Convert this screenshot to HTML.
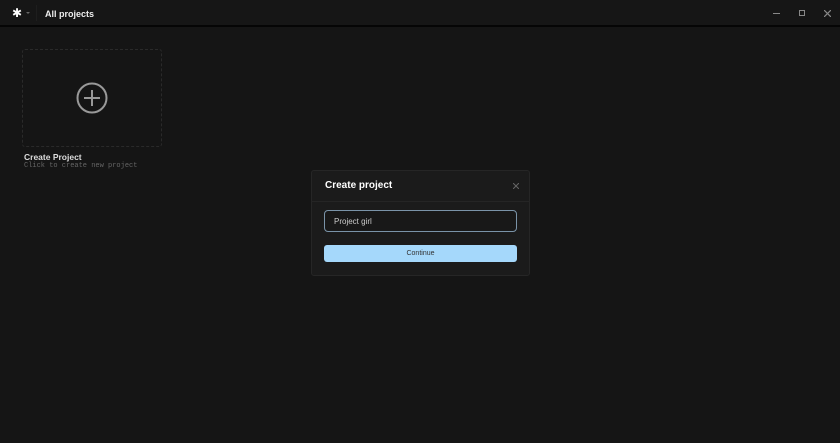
<!DOCTYPE html>
<html><head><style>
*{margin:0;padding:0;box-sizing:border-box}
body{width:840px;height:443px;background:#151515;font-family:"Liberation Sans",sans-serif;position:relative;overflow:hidden;color:#eee}
.hdr{position:absolute;left:0;top:0;width:840px;height:27px;background:#161616;border-bottom:2px solid #050505}
.abs{position:absolute}
</style></head><body>
<div class="hdr"></div>
<div class="abs" style="left:12px;top:7px;font-size:12px;color:#fff;line-height:12px">✱</div>
<div class="abs" style="left:26px;top:12px;width:0;height:0;border-left:2px solid transparent;border-right:2px solid transparent;border-top:2px solid #666"></div>
<div class="abs" style="left:36px;top:5px;width:1px;height:16px;background:#1e1e1e"></div>
<div class="abs" style="left:45px;top:9px;font-size:9px;font-weight:bold;color:#eee">All projects</div>
<div class="abs" style="left:773px;top:13px;width:7px;height:1px;background:#888"></div>
<div class="abs" style="left:799px;top:10px;width:6px;height:6px;border:1.5px solid #888"></div>
<svg class="abs" style="left:824px;top:10px" width="7" height="7"><path d="M0 0L7 7M7 0L0 7" stroke="#888" stroke-width="1.2"/></svg>
<div class="abs" style="left:22px;top:49px;width:140px;height:98px;border:1px dashed #2a2a2a;border-radius:3px"></div>
<svg class="abs" style="left:75px;top:81px" width="34" height="34"><circle cx="17" cy="17" r="14.5" fill="none" stroke="#999" stroke-width="2"/><path d="M17 9v16M9 17h16" stroke="#999" stroke-width="2"/></svg>
<div class="abs" style="left:24px;top:152px;font-size:8.5px;font-weight:bold;color:#ddd">Create Project</div>
<div class="abs" style="left:24px;top:162px;font-size:7px;font-family:'Liberation Mono',monospace;color:#666">Click to create new project</div>
<div class="abs" style="left:311px;top:170px;width:219px;height:106px;background:#1b1b1b;border:1px solid #262626;border-radius:3px"></div>
<div class="abs" style="left:311px;top:201px;width:219px;height:1px;background:#252525"></div>
<div class="abs" style="left:325px;top:180px;font-size:10px;font-weight:bold;color:#fff">Create project</div>
<svg class="abs" style="left:513px;top:183px" width="6" height="6"><path d="M0 0L6 6M6 0L0 6" stroke="#666" stroke-width="1"/></svg>
<div class="abs" style="left:324px;top:210px;width:193px;height:22px;border:1px solid #7a93a8;border-radius:4px;background:#181818"></div>
<div class="abs" style="left:334px;top:217px;font-size:8px;color:#ccc">Project girl</div>
<div class="abs" style="left:324px;top:245px;width:193px;height:17px;background:#a5d8fb;border-radius:3px;font-size:7px;color:#333;text-align:center;line-height:17px">Continue</div>
</body></html>
